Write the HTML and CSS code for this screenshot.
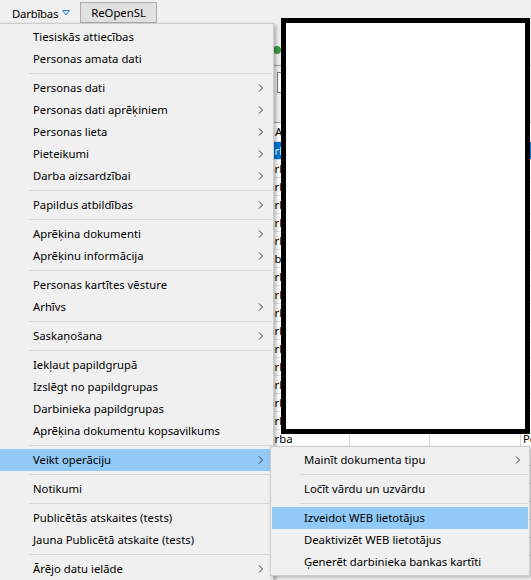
FILE: index.html
```html
<!DOCTYPE html>
<html lang="lv">
<head>
<meta charset="utf-8">
<title>Darbības</title>
<link rel="stylesheet" href="styles.css">
</head>
<body>
<div class="app">
  <div class="topbar">
    <div class="dd"><span class="dd-label">Darbības</span><svg class="dd-arrow" width="8" height="6" viewBox="0 0 8 6"><path d="M0.5 0.5 H7.5 L4 5 Z" fill="#cfe4fa" stroke="#2f7fd6" stroke-width="1"/></svg></div>
    <button class="btn">ReOpenSL</button>
  </div>
  <div class="work">
    <div class="side"></div>
    <div class="pane">
      <div class="pane-toolbar"><span class="go-icon"></span></div>
      <div class="pane-filter"><div class="field"><span class="field-mark"></span></div></div>
      <div class="grid">
        <div class="row head"><div class="c c1">Amats</div><div class="c c2"></div><div class="c c3"></div><div class="c c4"></div></div>
        <div class="row sel"><div class="c c1">Darba</div><div class="c c2"></div><div class="c c3"></div><div class="c c4"></div></div>
        <div class="row"><div class="c c1">Darba</div><div class="c c2"></div><div class="c c3"></div><div class="c c4"></div></div>
        <div class="row"><div class="c c1">Darba</div><div class="c c2"></div><div class="c c3"></div><div class="c c4"></div></div>
        <div class="row"><div class="c c1">Darba</div><div class="c c2"></div><div class="c c3"></div><div class="c c4"></div></div>
        <div class="row"><div class="c c1">Darba</div><div class="c c2"></div><div class="c c3"></div><div class="c c4"></div></div>
        <div class="row"><div class="c c1">Darba</div><div class="c c2"></div><div class="c c3"></div><div class="c c4"></div></div>
        <div class="row"><div class="c c1">Dabas</div><div class="c c2"></div><div class="c c3"></div><div class="c c4"></div></div>
        <div class="row"><div class="c c1">Darba</div><div class="c c2"></div><div class="c c3"></div><div class="c c4"></div></div>
        <div class="row"><div class="c c1">Darba</div><div class="c c2"></div><div class="c c3"></div><div class="c c4"></div></div>
        <div class="row"><div class="c c1">Darba</div><div class="c c2"></div><div class="c c3"></div><div class="c c4"></div></div>
        <div class="row"><div class="c c1">Darba</div><div class="c c2"></div><div class="c c3"></div><div class="c c4"></div></div>
        <div class="row"><div class="c c1">Darba</div><div class="c c2"></div><div class="c c3"></div><div class="c c4"></div></div>
        <div class="row"><div class="c c1">Darba</div><div class="c c2"></div><div class="c c3"></div><div class="c c4"></div></div>
        <div class="row"><div class="c c1">Darba</div><div class="c c2"></div><div class="c c3"></div><div class="c c4"></div></div>
        <div class="row"><div class="c c1">Darba</div><div class="c c2"></div><div class="c c3"></div><div class="c c4"></div></div>
        <div class="row"><div class="c c1">Darba</div><div class="c c2"></div><div class="c c3"></div><div class="c c4"></div></div>
        <div class="row"><div class="c c1">Darba</div><div class="c c2"></div><div class="c c3"></div><div class="c c4">Pe</div></div>
        <div class="row"><div class="c c1">Darba</div><div class="c c2"></div><div class="c c3"></div><div class="c c4"></div></div>
        <div class="row"><div class="c c1">Darba</div><div class="c c2"></div><div class="c c3"></div><div class="c c4"></div></div>
        <div class="row"><div class="c c1">Darba</div><div class="c c2"></div><div class="c c3"></div><div class="c c4"></div></div>
        <div class="row"><div class="c c1">Darba</div><div class="c c2"></div><div class="c c3"></div><div class="c c4"></div></div>
        <div class="row"><div class="c c1">Darba</div><div class="c c2"></div><div class="c c3"></div><div class="c c4"></div></div>
        <div class="row"><div class="c c1">Darba</div><div class="c c2"></div><div class="c c3"></div><div class="c c4"></div></div>
      </div>
    </div>
  </div>

  <div class="redact"></div>

  <div class="menu main">
    <div class="mi"><span class="t">Tiesiskās attiecības</span></div>
    <div class="mi"><span class="t">Personas amata dati</span></div>
    <div class="sep"></div>
    <div class="mi"><span class="t">Personas dati</span><svg class="chev" viewBox="0 0 5 8"><path d="M1 0.5 L4.5 4 L1 7.5" fill="none" stroke="#333" stroke-width="1"/></svg></div>
    <div class="mi"><span class="t">Personas dati aprēķiniem</span><svg class="chev" viewBox="0 0 5 8"><path d="M1 0.5 L4.5 4 L1 7.5" fill="none" stroke="#333" stroke-width="1"/></svg></div>
    <div class="mi"><span class="t">Personas lieta</span><svg class="chev" viewBox="0 0 5 8"><path d="M1 0.5 L4.5 4 L1 7.5" fill="none" stroke="#333" stroke-width="1"/></svg></div>
    <div class="mi"><span class="t">Pieteikumi</span><svg class="chev" viewBox="0 0 5 8"><path d="M1 0.5 L4.5 4 L1 7.5" fill="none" stroke="#333" stroke-width="1"/></svg></div>
    <div class="mi"><span class="t">Darba aizsardzībai</span><svg class="chev" viewBox="0 0 5 8"><path d="M1 0.5 L4.5 4 L1 7.5" fill="none" stroke="#333" stroke-width="1"/></svg></div>
    <div class="sep"></div>
    <div class="mi"><span class="t">Papildus atbildības</span><svg class="chev" viewBox="0 0 5 8"><path d="M1 0.5 L4.5 4 L1 7.5" fill="none" stroke="#333" stroke-width="1"/></svg></div>
    <div class="sep"></div>
    <div class="mi"><span class="t">Aprēķina dokumenti</span><svg class="chev" viewBox="0 0 5 8"><path d="M1 0.5 L4.5 4 L1 7.5" fill="none" stroke="#333" stroke-width="1"/></svg></div>
    <div class="mi"><span class="t">Aprēķinu informācija</span><svg class="chev" viewBox="0 0 5 8"><path d="M1 0.5 L4.5 4 L1 7.5" fill="none" stroke="#333" stroke-width="1"/></svg></div>
    <div class="sep"></div>
    <div class="mi"><span class="t">Personas kartītes vēsture</span></div>
    <div class="mi"><span class="t">Arhīvs</span><svg class="chev" viewBox="0 0 5 8"><path d="M1 0.5 L4.5 4 L1 7.5" fill="none" stroke="#333" stroke-width="1"/></svg></div>
    <div class="sep"></div>
    <div class="mi"><span class="t">Saskaņošana</span><svg class="chev" viewBox="0 0 5 8"><path d="M1 0.5 L4.5 4 L1 7.5" fill="none" stroke="#333" stroke-width="1"/></svg></div>
    <div class="sep"></div>
    <div class="mi"><span class="t">Iekļaut papildgrupā</span></div>
    <div class="mi"><span class="t">Izslēgt no papildgrupas</span></div>
    <div class="mi"><span class="t">Darbinieka papildgrupas</span></div>
    <div class="mi"><span class="t">Aprēķina dokumentu kopsavilkums</span></div>
    <div class="sep"></div>
    <div class="mi hot"><span class="t">Veikt operāciju</span><svg class="chev" viewBox="0 0 5 8"><path d="M1 0.5 L4.5 4 L1 7.5" fill="none" stroke="#333" stroke-width="1"/></svg></div>
    <div class="sep"></div>
    <div class="mi"><span class="t">Notikumi</span></div>
    <div class="sep"></div>
    <div class="mi"><span class="t">Publicētās atskaites (tests)</span></div>
    <div class="mi"><span class="t">Jauna Publicētā atskaite (tests)</span></div>
    <div class="sep"></div>
    <div class="mi"><span class="t">Ārējo datu ielāde</span><svg class="chev" viewBox="0 0 5 8"><path d="M1 0.5 L4.5 4 L1 7.5" fill="none" stroke="#333" stroke-width="1"/></svg></div>
  </div>

  <div class="menu sub">
    <div class="mi"><span class="t">Mainīt dokumenta tipu</span><svg class="chev" viewBox="0 0 5 8"><path d="M1 0.5 L4.5 4 L1 7.5" fill="none" stroke="#333" stroke-width="1"/></svg></div>
    <div class="sep"></div>
    <div class="mi"><span class="t">Ločīt vārdu un uzvārdu</span></div>
    <div class="sep"></div>
    <div class="mi hot"><span class="t">Izveidot WEB lietotājus</span></div>
    <div class="mi"><span class="t">Deaktivizēt WEB lietotājus</span></div>
    <div class="mi"><span class="t">Ģenerēt darbinieka bankas kartīti</span></div>
  </div>
</div>
</body>
</html>
```

FILE: styles.css
```css
html, body {
  margin: 0;
  padding: 0;
}
body {
  background: #f0f0f0;
  font-family: "Noto Sans", "Liberation Sans", sans-serif;
  font-size: 11.3px;
  color: #000;
  overflow: hidden;
}
.app {
  position: relative;
  width: 531px;
  height: 580px;
  overflow: hidden;
}

/* top bar */
.topbar {
  display: flex;
  align-items: flex-start;
  height: 23px;
  padding-top: 2px;
  box-sizing: border-box;
}
.dd {
  width: 79px;
  height: 21px;
  padding-left: 12px;
  padding-top: 1px;
  box-sizing: border-box;
  display: flex;
  align-items: center;
  gap: 4px;
}
.dd-label {
  letter-spacing: -0.2px;
}
.dd-arrow {
  display: block;
  flex: none;
}
.btn {
  margin: 0 0 0 1px;
  width: 77px;
  height: 21px;
  padding: 0;
  border: 1px solid #adadad;
  background: #e1e1e1;
  font: inherit;
  color: #000;
}

/* window behind */
.work {
  display: flex;
  height: 557px;
}
.side {
  width: 258px;
  flex: none;
}
.pane {
  flex: 1;
  display: flex;
  flex-direction: column;
}
.pane-toolbar {
  height: 42px;
  border-bottom: 1px solid #a0a0a0;
}
.go-icon {
  display: block;
  width: 8px;
  height: 8px;
  border-radius: 50%;
  background: #3f9b3f;
  margin: 23px 0 0 15px;
}
.pane-filter {
  height: 50px;
  padding: 6px 0 0 19px;
  border-bottom: 1px solid #a0a0a0;
}
.field {
  width: 200px;
  height: 19px;
  border: 1px solid #7a7a7a;
  background: #fff;
  display: flex;
  align-items: center;
  padding-left: 3px;
}
.field-mark {
  width: 8px;
  height: 8px;
  background: #f2cf5b;
}
.grid {
  flex: 1;
  background: #fff;
}
.row {
  display: flex;
  height: 17px;
  border-bottom: 1px solid #e3e3e3;
}
.row.head {
  height: 18px;
  background: #fff;
}
.row.sel {
  background: #0078d7;
  color: #fff;
}
.c {
  box-sizing: border-box;
  border-right: 1px solid #d5d5d5;
  padding-left: 2px;
  line-height: 17px;
  white-space: nowrap;
  overflow: hidden;
}
.head .c {
  line-height: 18px;
}
.head .c1 {
  padding-left: 17px;
}
.c1 { width: 92px; flex: none; }
.c2 { width: 80px; flex: none; }
.c3 { width: 91px; flex: none; }
.c4 { flex: 1; border-right: none; }

/* redaction box */
.redact {
  position: absolute;
  left: 281px;
  top: 18px;
  width: 249px;
  height: 416px;
  box-sizing: border-box;
  border: 5px solid #000;
  background: #fff;
}

/* menus */
.menu {
  position: absolute;
  background: #f0f0f0;
  border: 1px solid #cccccc;
  box-shadow: 2px 2px 4px rgba(0, 0, 0, 0.3);
  box-sizing: border-box;
}
.main {
  left: -1px;
  top: 23px;
  width: 275px;
  padding: 2px 3px 2px 0;
}
.sub {
  left: 270px;
  top: 446px;
  width: 260px;
  padding: 2px 1px;
}
.mi {
  height: 22px;
  box-sizing: border-box;
  padding-bottom: 1px;
  display: flex;
  align-items: center;
  white-space: nowrap;
}
.main .mi {
  padding-left: 33px;
  padding-right: 7px;
}
.sub .mi {
  padding-left: 32px;
  padding-right: 8px;
}
.mi .t {
  flex: 1;
}
.mi .chev {
  margin-top: 1px;
}
.mi.hot {
  background: #91c9f7;
}
.chev {
  width: 5px;
  height: 8px;
  flex: none;
}
.sep {
  height: 1px;
  background: #d7d7d7;
  margin: 3px 0;
}
.main .sep {
  margin-left: 29px;
  margin-right: -2px;
}
.sub .sep {
  margin-left: 28px;
}
```
